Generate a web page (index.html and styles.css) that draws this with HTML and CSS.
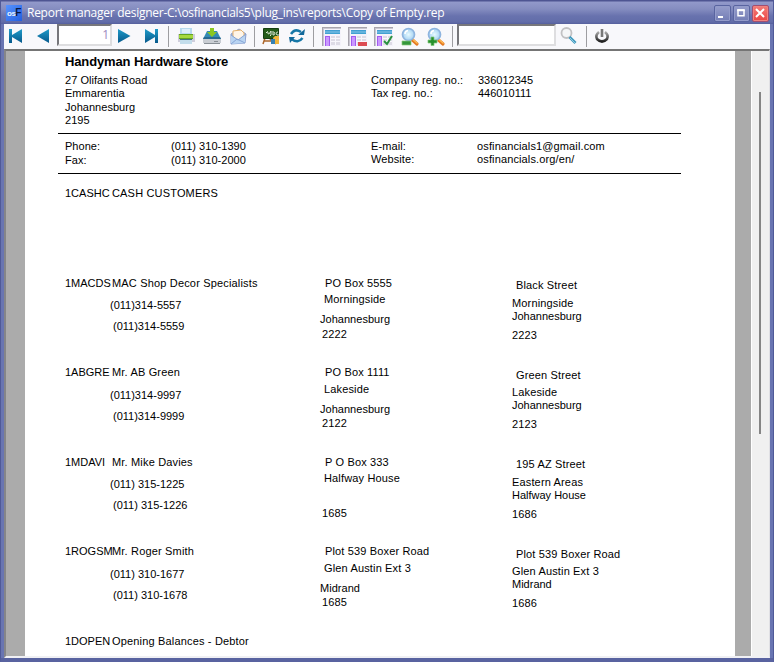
FILE: index.html
```html
<!DOCTYPE html>
<html lang="en">
<head>
<meta charset="utf-8">
<title>Report manager designer</title>
<link rel="stylesheet" href="styles.css">
</head>
<body>
<svg width="0" height="0" class="defs">
<defs>
<linearGradient id="blue" x2="0" y2="1"><stop stop-color="#1f9bc9"/><stop offset="1" stop-color="#07598c"/></linearGradient>
<linearGradient id="head" x2="0" y2="1"><stop stop-color="#2f95cd"/><stop offset=".5" stop-color="#76bce2"/><stop offset="1" stop-color="#3098cc"/></linearGradient>
<radialGradient id="lens"><stop stop-color="#e6f9ff"/><stop offset="1" stop-color="#a5d2f2"/></radialGradient>
<linearGradient id="dark" x2="0" y2="1"><stop stop-color="#aaa"/><stop offset="1" stop-color="#222"/></linearGradient>
<symbol id="sheet" viewBox="0 0 20 20"><path fill="#f4f2fa" d="M1 1h18v18H1z"/><path fill="#a7a4ad" d="M0 0h19v1H1v18H0z"/><path fill="#c9c7d1" d="M1 1h18v1H2v17H1z"/><path fill="url(#head)" d="M3 3h15v4H3z"/><path fill="#a35bf0" d="M3 9h5v10H3z"/><path fill="#c998ff" d="M4 10h3v9H4z"/><path fill="#dedce6" d="M9 9h9v9H9z"/><path stroke="#f8f7fc" d="M9 11.5h9M9 14.5h9M13.500 9v9"/></symbol>
<symbol id="glass" viewBox="0 0 20 20"><path stroke="#e37821" stroke-width="3.200" stroke-linecap="round" d="M12.500 13l4.500 4"/><path stroke="#ffbf55" stroke-width="1.200" d="M13 12.500l4.500 4"/><circle cx="8.500" cy="7.500" r="6" fill="url(#lens)" stroke="#8eb4df" stroke-width="1.700"/><path d="M5 7q0-3 3-3.500" fill="none" stroke="#fff" stroke-width="1.500"/></symbol>
</defs>
</svg>
<div class="window">
  <header class="titlebar">
    <span class="logo">os<b>F</b></span>
    <h1>Report manager designer-C:\osfinancials5\plug_ins\reports\Copy of Empty.rep</h1>
    <button class="win"><svg width="16" height="16"><path fill="#fff" d="M4 11h5v2H4z"/></svg></button>
    <button class="win"><svg width="16" height="16"><path fill="none" stroke="#fff" stroke-width="1.500" d="M5 5.200h6v5.600H5z"/><path fill="#fff" d="M4.200 4.200h7.500v2H4.200z"/></svg></button>
    <button class="win close"><svg width="16" height="16"><path stroke="#fff" stroke-width="2" d="M4 4l8 8M12 4l-8 8"/></svg></button>
  </header>
  <nav class="toolbar">
    <svg class="ic first" viewBox="0 0 20 20"><path fill="url(#blue)" d="M4 3h3v6l10-6v14L7 11v6H4z"/></svg>
    <svg class="ic prev" viewBox="0 0 20 20"><path fill="url(#blue)" d="M4 10l12-7v14z"/></svg>
    <span class="field page">1</span>
    <svg class="ic next" viewBox="0 0 20 20"><path fill="url(#blue)" d="M16.500 10L4 3v14z"/></svg>
    <svg class="ic last" viewBox="0 0 20 20"><path fill="url(#blue)" d="M17 3h-3v6L4 3v14l10-6v6h3z"/></svg>
    <i class="sep s1"></i>
    <svg class="ic" viewBox="0 0 20 20"><path fill="#b7d9ed" d="M4 2h12v7H4z"/><path fill="#dceefa" d="M6 3h8v4H6z"/><path fill="#cfcedc" d="M2 8h17v8H2z"/><path fill="#64a421" d="M3 8h14v5H3z"/><path fill="#a5d83f" d="M3 9h14v3H3z"/><path fill="#477581" d="M4 13h12v1H4z"/><path fill="#c3ddeb" d="M4 14h12v4H4z"/></svg>
    <svg class="ic" viewBox="0 0 20 20"><path fill="#348ab5" d="M5 5h10l4 8H1z"/><path fill="#286a92" d="M2 11h16l1 2H1z"/><path fill="#c9cdd3" d="M1 13h18v4H1z"/><path fill="#888f96" d="M2 17h16v1H2zM12 15h4v1h-4z"/><path fill="#8ac721" d="M8 2h4v4h3l-5 5-5-5h3z"/></svg>
    <svg class="ic" viewBox="0 0 20 20"><path fill="#a5b9dd" stroke="#8da1cf" d="M3 8l8-5 7 5-1 9-14 1z"/><path fill="#fff5e8" stroke="#e6b26c" d="M5 5l8-1 3 3v4l-6 4-5-4z"/><path fill="#b9d4f2" d="M3 9l7 5 7-5v8L3 18z"/><path stroke="#86a4d5" fill="none" d="M3 18l6-5 8 4M3 9l7 5 8-6"/></svg>
    <i class="sep s2"></i>
    <svg class="ic" viewBox="0 0 20 20"><path stroke="#ac672d" stroke-width="1.500" d="M4 12l-2 6M8 12l7 6M3 15h9"/><path fill="#245b18" stroke="#163e12" d="M2.500 2.500h15v10h-15z"/><path d="M5 7q2-3 2 0t3-2v4l-1 1m3-5v4q3 0 1-3m4 0q-3 0-1 3h2" fill="none" stroke="#dce8d5"/><path fill="#efb43b" d="M12 12l2-2h4v8h-5z"/><path fill="#3580b3" d="M10 13h4v5h-4z"/></svg>
    <svg class="ic sync" viewBox="0 0 20 20"><g fill="none" stroke="#1677a7" stroke-width="2.500"><path d="M4 8q4-6 10-2M15.500 12q-4.500 6-11 1"/></g><path fill="#12699b" d="M11 9h6l1-6zM2 11h6l-5 6z"/></svg>
    <i class="sep s3"></i>
    <svg class="ic drop"><use href="#sheet"/></svg>
    <svg class="ic drop" viewBox="0 0 20 20"><use href="#sheet"/><path fill="#dc4c53" d="M10 15h9v4h-9z"/></svg>
    <svg class="ic drop" viewBox="0 0 20 20"><use href="#sheet"/><path fill="none" stroke="#299140" stroke-width="2" d="M10 14l3 3 5-8"/></svg>
    <svg class="ic drop" viewBox="0 0 20 20"><use href="#glass"/><path fill="#35973b" stroke="#8ac77d" stroke-width=".7" d="M2 14h9v4H2z"/></svg>
    <svg class="ic drop" viewBox="0 0 20 20"><use href="#glass"/><path fill="#27902d" stroke="#83c979" stroke-width=".7" d="M5 10h3v3h3v3H8v2.500H5V16H2v-3h3z"/></svg>
    <i class="sep s4"></i>
    <span class="field search"></span>
    <svg class="ic find" viewBox="0 0 20 20"><circle cx="7.500" cy="7" r="5" fill="#f5f6f7" stroke="#c1c1c3" stroke-width="1.800"/><path stroke="#3f98bd" stroke-width="2.800" d="M10.500 11l6 6"/><path stroke="#8fcbe2" d="M11 12l5 5"/></svg>
    <i class="sep s5"></i>
    <svg class="ic power" viewBox="0 0 20 20"><path fill="none" stroke="url(#dark)" stroke-width="2.600" d="M7 6q-4 3-2 7 5 5 10 0 2-4-2-7"/><path stroke="#777" stroke-width="2.600" d="M10 3v8"/></svg>
  </nav>
  <main class="viewer">
    <article class="sheet">
      <h2>Handyman Hardware Store</h2>
      <section class="company">
        <address>27 Olifants Road<br>Emmarentia<br>Johannesburg<br>2195</address>
        <p class="wide">Company reg. no.:<br>Tax reg. no.:</p>
        <p>336012345<br>446010111</p>
      </section>
      <section class="contact">
        <p class="loose">Phone:<br>Fax:</p>
        <p class="loose">(011) 310-1390<br>(011) 310-2000</p>
        <p class="wide">E-mail:<br>Website:</p>
        <p class="mail">osfinancials1@gmail.com<br>osfinancials.org/en/</p>
      </section>
      <section class="customer">
        <div class="who"><div class="name"><span>1CASHC</span><span>CASH CUSTOMERS</span></div></div>
      </section>
      <section class="customer short">
        <div class="who"><div class="name"><span>1MACDS</span><span>MAC Shop Decor Specialists</span></div><p class="tel">(011)314-5557</p><p class="fax">(011)314-5559</p></div>
        <div class="post"><p>PO Box 5555</p><p>Morningside</p><p>Johannesburg</p><p>2222</p></div>
        <div class="street"><p>Black Street</p><p>Morningside</p><p>Johannesburg</p><p>2223</p></div>
      </section>
      <section class="customer lower">
        <div class="who"><div class="name"><span>1ABGRE</span><span>Mr. AB Green</span></div><p class="tel">(011)314-9997</p><p class="fax">(011)314-9999</p></div>
        <div class="post"><p>PO Box 1111</p><p>Lakeside</p><p>Johannesburg</p><p>2122</p></div>
        <div class="street"><p>Green Street</p><p>Lakeside</p><p>Johannesburg</p><p>2123</p></div>
      </section>
      <section class="customer short">
        <div class="who"><div class="name"><span>1MDAVI</span><span>Mr. Mike Davies</span></div><p class="tel">(011) 315-1225</p><p class="fax">(011) 315-1226</p></div>
        <div class="post"><p>P O Box 333</p><p>Halfway House</p><p></p><p>1685</p></div>
        <div class="street"><p>195 AZ Street</p><p>Eastern Areas</p><p>Halfway House</p><p>1686</p></div>
      </section>
      <section class="customer lower">
        <div class="who"><div class="name"><span>1ROGSM</span><span>Mr. Roger Smith</span></div><p class="tel">(011) 310-1677</p><p class="fax">(011) 310-1678</p></div>
        <div class="post"><p>Plot 539 Boxer Road</p><p>Glen Austin Ext 3</p><p>Midrand</p><p>1685</p></div>
        <div class="street"><p>Plot 539 Boxer Road</p><p>Glen Austin Ext 3</p><p>Midrand</p><p>1686</p></div>
      </section>
      <section class="customer end">
        <div class="who"><div class="name"><span>1DOPEN</span><span>Opening Balances - Debtor</span></div></div>
      </section>
    </article>
    <div class="scroll"><div class="thumb"></div></div>
  </main>
</div>
</body>
</html>
```

FILE: styles.css
```css
* { box-sizing: border-box; }
body { margin: 0; overflow: hidden; font-family: "Liberation Sans", Arial, sans-serif; }
p, h1, h2, address { margin: 0; font-style: normal; }
.defs { position: absolute; }
.window {
  width: 774px; height: 662px; padding: 0 3px; background: #6975b2;
  border: 1px solid #505a98; border-top: 0; border-bottom: 4px solid #5963a0;
  display: flex; flex-direction: column;
}
.titlebar {
  height: 24px; margin: 0 -3px; padding: 2px 4px 0 5px; display: flex; align-items: center;
  background: linear-gradient(#4e5592 0 1px, #9299ca 2px, #858dc0 9px, #6872ae 16px, #626da9 22px, #555f9d);
}
.logo {
  width: 16px; height: 16px; background: linear-gradient(135deg, #5693ff, #235fe0); color: #e9f3ff;
  font: bold 8px/16px "Liberation Sans", sans-serif; letter-spacing: -.5px; text-align: center; white-space: nowrap;
}
.logo b { color: #08193f; font-size: 10px; }
h1 {
  flex: 1; margin-left: 5px; font: 12px/20px "Open Sans", sans-serif; color: #fff;
  letter-spacing: -.26px; white-space: nowrap;
}
.win {
  width: 17px; height: 17px; padding: 0; margin-left: 2px; border: 1px solid #5964a0; border-radius: 2px;
  background: linear-gradient(#969dcb, #737db5); box-shadow: inset 0 0 0 1px #939bca;
}
.win svg { display: block; margin: -1px; }
.close { background: linear-gradient(#f37d79, #ec4543); box-shadow: inset 0 0 0 1px #f0837f; border-color: #a34e70; }
.toolbar {
  height: 25px; flex: none; background: #f8f8fb; display: flex; align-items: center; padding-left: 1px;
}
.ic { width: 20px; height: 20px; flex: none; margin-right: 6px; position: relative; top: -.5px; }
.drop { top: .5px; }
.first { margin-right: 8px; }
.prev { margin-right: 4px; }
.next { margin-left: 1px; margin-right: 7px; }
.last { margin-right: 7px; }
.field {
  height: 22px; align-self: flex-start; flex: none; background: #fff;
  border: 2px solid; border-color: #77777b #dedee0 #dedee0 #77777b;
}
.page { width: 55px; text-align: right; font: 12px/18px "Open Sans", sans-serif; color: #9c8ac0; padding-right: 1px; margin-right: 1px; }
.search { width: 99px; }
.sep { width: 1px; height: 21px; background: #9d9da1; flex: none; }
.s1 { margin-right: 7px; }
.s2 { margin-right: 6px; }
.s3 { margin-right: 8px; }
.s4 { margin-right: 4px; }
.s5 { margin-right: 5px; }
.find { margin: 0 7px 0 3px; }
.viewer {
  flex: 1; min-height: 0; display: flex; background: #ababab; border: solid;
  border-width: 2px 1px 2px 2px; border-color: #757575 #e0e0e4 #f0f0f4 #858589;
}
.sheet {
  width: 710px; margin: 0 16px 0 19px; background: #fff; overflow: hidden;
  font-size: 11px; line-height: 13px; letter-spacing: .15px; color: #000;
}
h2 { font-size: 13px; line-height: 17px; letter-spacing: -.13px; padding: 2px 0 0 40px; height: 22px; }
.company, .contact { display: grid; margin-left: 33px; padding-left: 7px; width: 623px; border-bottom: 1px solid #000; }
.company { grid-template-columns: 306px 107px 1fr; padding-top: 1px; height: 61px; }
.company address { line-height: 13.400px; letter-spacing: .03px; }
.company p:last-child { letter-spacing: 0; }
.wide { letter-spacing: .1px; }
.loose { letter-spacing: .03px; line-height: 14px; }
.contact { grid-template-columns: 106px 200px 106px 1fr; padding-top: 5px; height: 40px; }
.contact .wide, .mail { padding-top: 1px; }
.mail { letter-spacing: .13px; }
.customer { height: 90px; padding-left: 40px; display: grid; grid-template-columns: 255px 192px 1fr; }
.contact + .customer { margin-top: 13px; }
.short { height: 89px; }
.name { display: flex; height: 13px; letter-spacing: .17px; }
.name span:first-child { width: 47px; flex: none; white-space: nowrap; letter-spacing: 0; }
.customer p { height: 13px; white-space: nowrap; }
.customer .tel { margin: 9px 0 0 45px; letter-spacing: 0; }
.customer .fax { margin: 8px 0 0 48px; letter-spacing: 0; }
.lower .tel { margin-top: 10px; }
.post p:nth-child(1) { margin-left: 5px; }
.post p:nth-child(2) { margin: 4px 0 0 4px; }
.post p:nth-child(3) { margin-top: 7px; letter-spacing: .03px; }
.post p:nth-child(4) { margin: 1px 0 0 2px; }
.short .post p:nth-child(2) { margin-top: 3px; }
.short .post p:nth-child(4) { margin-top: 2px; }
.street p:nth-child(1) { margin: 3px 0 0 4px; }
.street p:nth-child(2) { margin-top: 4px; }
.street p:nth-child(3) { letter-spacing: 0; }
.street p:nth-child(4) { margin-top: 6px; }
.short .street p:nth-child(1) { margin-top: 2px; }
.short .street p:nth-child(2) { margin-top: 5px; }
.scroll { flex: 1; background: #f0f0f0; border-left: 1px solid #fff; padding: 41px 0 0 7px; }
.thumb { width: 2px; height: 342px; background: #858585; }
```
